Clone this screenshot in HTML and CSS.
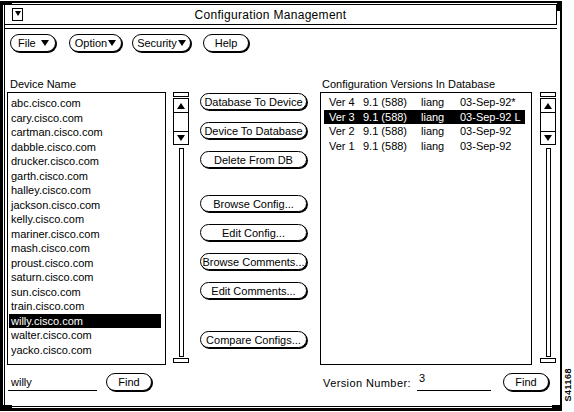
FILE: index.html
```html
<!DOCTYPE html>
<html lang="en">
<head>
    <meta charset="UTF-8">
    <title>Configuration Management</title>
    <link rel="stylesheet" href="styles.css">
</head>
<body>
<div class="screen">
    <div class="frame">
        <span class="corner tl"></span>
        <span class="corner tr"></span>
        <span class="corner bl"></span>
        <span class="corner br"></span>
        <div class="inner">
            <div class="titlebar">
                <span class="win-menu"><span class="tri-down small"></span></span>
                <span class="title">Configuration Management</span>
            </div>
            <div class="title-rule"></div>

            <div class="menubar">
                <button class="pill menu-file">File <span class="tri-down"></span></button>
                <button class="pill menu-option">Option<span class="tri-down"></span></button>
                <button class="pill menu-security">Security<span class="tri-down"></span></button>
                <button class="pill menu-help">Help</button>
            </div>

            <div class="panes">
                <div class="label device-label">Device Name</div>
                <div class="label versions-label">Configuration Versions In Database</div>

                <ul class="listbox devices">
                    <li>abc.cisco.com</li>
                    <li>cary.cisco.com</li>
                    <li>cartman.cisco.com</li>
                    <li>dabble.cisco.com</li>
                    <li>drucker.cisco.com</li>
                    <li>garth.cisco.com</li>
                    <li>halley.cisco.com</li>
                    <li>jackson.cisco.com</li>
                    <li>kelly.cisco.com</li>
                    <li>mariner.cisco.com</li>
                    <li>mash.cisco.com</li>
                    <li>proust.cisco.com</li>
                    <li>saturn.cisco.com</li>
                    <li>sun.cisco.com</li>
                    <li>train.cisco.com</li>
                    <li class="selected">willy.cisco.com</li>
                    <li>walter.cisco.com</li>
                    <li>yacko.cisco.com</li>
                </ul>

                <div class="scrollbar devices-sb">
                    <div class="sb-cap"></div>
                    <div class="sb-arrows">
                        <div class="sb-up"><span class="tri-up"></span></div>
                        <div class="sb-mid"></div>
                        <div class="sb-down"><span class="tri-down"></span></div>
                    </div>
                    <div class="sb-track"></div>
                    <div class="sb-cap end"></div>
                </div>

                <div class="actions">
                    <button class="pill action">Database To Device</button>
                    <button class="pill action">Device To Database</button>
                    <button class="pill action">Delete From DB</button>
                    <button class="pill action group-start">Browse Config...</button>
                    <button class="pill action">Edit Config...</button>
                    <button class="pill action">Browse Comments...</button>
                    <button class="pill action">Edit Comments...</button>
                    <button class="pill action last-group">Compare Configs...</button>
                </div>

                <div class="listbox versions">
                    <div class="ver-row"><span class="c-ver">Ver 4</span><span class="c-ios">9.1 (588)</span><span class="c-user">liang</span><span class="c-date">03-Sep-92*</span></div>
                    <div class="ver-row selected"><span class="c-ver">Ver 3</span><span class="c-ios">9.1 (588)</span><span class="c-user">liang</span><span class="c-date">03-Sep-92 L</span></div>
                    <div class="ver-row"><span class="c-ver">Ver 2</span><span class="c-ios">9.1 (588)</span><span class="c-user">liang</span><span class="c-date">03-Sep-92</span></div>
                    <div class="ver-row"><span class="c-ver">Ver 1</span><span class="c-ios">9.1 (588)</span><span class="c-user">liang</span><span class="c-date">03-Sep-92</span></div>
                </div>

                <div class="scrollbar versions-sb">
                    <div class="sb-cap"></div>
                    <div class="sb-arrows">
                        <div class="sb-up"><span class="tri-up"></span></div>
                        <div class="sb-mid"></div>
                        <div class="sb-down"><span class="tri-down"></span></div>
                    </div>
                    <div class="sb-track"></div>
                    <div class="sb-cap end"></div>
                </div>

                <div class="find-row device-find">
                    <input class="field device-field" type="text" value="willy">
                    <button class="pill find">Find</button>
                </div>

                <div class="find-row version-find">
                    <span class="field-label">Version Number:</span>
                    <input class="field version-field" type="text" value="3">
                    <button class="pill find">Find</button>
                </div>
            </div>
        </div>
    </div>
    <div class="margin-note"><span>S41168</span></div>
</div>
</body>
</html>
```

FILE: styles.css
```css
body {
    margin: 0;
    font-family: "Liberation Sans", Arial, sans-serif;
    font-size: 11px;
    color: #000;
    background-color: #fff;
}
.screen {
    display: flex;
    width: 574px;
    height: 412px;
}
/* Window frame */
.frame {
    position: relative;
    width: 557px;
    height: 405px;
    margin-top: 1px;
    border-top: 2px solid #000;
    border-left: 3px solid #000;
    border-right: 2px solid #000;
    border-bottom: 3px solid #000;
    display: flex;
}
.inner {
    flex: 1;
    display: flex;
    flex-direction: column;
    margin: 0 0 1px 1px;
    border-left: 1px solid #000;
    border-bottom: 1px solid #000;
}
.corner {
    position: absolute;
    background-color: #000;
}
.corner.tl {
    left: 0;
    top: 0;
    width: 9px;
    height: 2px;
}
.corner.tr {
    right: 0;
    top: 0;
    width: 3px;
    height: 8px;
}
.corner.bl {
    left: 0;
    bottom: 0;
    width: 9px;
    height: 3px;
}
.corner.br {
    right: 0;
    bottom: 0;
    width: 8px;
    height: 3px;
}
/* Title bar */
.titlebar {
    box-sizing: border-box;
    height: 21px;
    margin: 1px 3px 0 0;
    border: 1px solid #000;
    border-left: none;
    display: flex;
    align-items: center;
}
.win-menu {
    box-sizing: border-box;
    width: 11px;
    height: 13px;
    margin-left: 7px;
    border: 1px solid #000;
    display: flex;
    justify-content: center;
    padding-top: 2px;
}
.title {
    flex: 1;
    text-align: center;
    font-size: 12px;
    padding-right: 38px;
    letter-spacing: 0.3px;
}
.title-rule {
    height: 1px;
    margin: 3px 3px 0 0;
    background-color: #000;
}
/* Triangles */
.tri-down {
    width: 0;
    height: 0;
    border-left: 4px solid transparent;
    border-right: 4px solid transparent;
    border-top: 6px solid #000;
}
.tri-down.small {
    border-left-width: 3px;
    border-right-width: 3px;
    border-top-width: 5px;
}
.tri-up {
    width: 0;
    height: 0;
    border-left: 4px solid transparent;
    border-right: 4px solid transparent;
    border-bottom: 6px solid #000;
}
/* Buttons */
.pill {
    box-sizing: border-box;
    height: 17px;
    padding: 0;
    border: 1px solid #000;
    border-radius: 9px;
    box-shadow: 1px 1px 0 #000;
    background-color: #fff;
    color: #000;
    font: inherit;
    display: flex;
    align-items: center;
    justify-content: center;
}
.menubar {
    display: flex;
    height: 18px;
    margin-top: 5px;
    padding-left: 5px;
}
.menubar .pill {
    height: 18px;
}
.menu-file {
    width: 46px;
    justify-content: space-between;
    padding: 0 6px 0 7px;
}
.menu-option {
    width: 53px;
    margin-left: 13px;
    gap: 1px;
}
.menu-security {
    width: 59px;
    margin-left: 10px;
    gap: 1px;
}
.menu-help {
    width: 46px;
    margin-left: 12px;
}
/* Main panes */
.panes {
    display: grid;
    grid-template-columns: 159px 7px 16px 11px 108px 12px 212px 8px 16px;
    grid-template-rows: 16px 273px 7px 20px;
    margin: 24px 0 0 2px;
}
.label {
    line-height: 16px;
    grid-row: 1;
}
.device-label {
    grid-column: 1;
    padding-left: 3px;
}
.versions-label {
    grid-column: 7 / 10;
    padding-left: 2px;
}
.listbox {
    box-sizing: border-box;
    margin: 0;
    border: 1px solid #000;
    grid-row: 2;
}
.devices {
    grid-column: 1;
    list-style: none;
    padding: 3px 0 0 0;
}
.devices li {
    height: 14.5px;
    line-height: 14.5px;
    margin: 0 4px 0 1px;
    padding-left: 2px;
    white-space: nowrap;
}
.selected {
    background-color: #000;
    color: #fff;
}
.versions {
    grid-column: 7;
    padding-top: 2px;
}
.ver-row {
    display: flex;
    height: 14.5px;
    line-height: 14.5px;
    margin: 0 6px 0 3px;
    padding-left: 5px;
    white-space: nowrap;
}
.ver-row span {
    flex: none;
}
.c-ver {
    width: 34px;
}
.c-ios {
    width: 58px;
}
.c-user {
    width: 39px;
}
/* Scrollbars */
.scrollbar {
    grid-row: 2;
    display: flex;
    flex-direction: column;
    align-items: center;
}
.devices-sb {
    grid-column: 3;
}
.versions-sb {
    grid-column: 9;
}
.sb-cap {
    box-sizing: border-box;
    width: 16px;
    height: 5px;
    border: 1px solid #000;
}
.sb-cap.end {
    margin: 1px 0 2px 0;
}
.sb-arrows {
    box-sizing: border-box;
    width: 16px;
    height: 47px;
    margin-top: 1px;
    border: 1px solid #000;
    display: flex;
    flex-direction: column;
}
.sb-up {
    height: 13px;
    border-bottom: 1px solid #000;
    display: flex;
    align-items: center;
    justify-content: center;
}
.sb-mid {
    flex: 1;
}
.sb-down {
    height: 12px;
    border-top: 1px solid #000;
    display: flex;
    align-items: center;
    justify-content: center;
}
.sb-track {
    box-sizing: border-box;
    flex: 1;
    width: 5px;
    margin-top: 3px;
    border: 1px solid #000;
}
/* Action buttons */
.actions {
    grid-column: 5;
    grid-row: 2;
    display: flex;
    flex-direction: column;
    align-items: flex-start;
    padding-top: 1px;
}
.action {
    width: 107px;
    margin-top: 12px;
    white-space: nowrap;
}
.action:first-child {
    margin-top: 0;
}
.action.group-start {
    margin-top: 27px;
}
.action.last-group {
    margin-top: 32px;
}
/* Bottom find rows */
.find-row {
    grid-row: 4;
    display: flex;
    align-items: flex-start;
}
.device-find {
    grid-column: 1;
}
.version-find {
    grid-column: 7 / 10;
}
.field {
    box-sizing: border-box;
    height: 19px;
    padding: 0 0 0 3px;
    border: none;
    border-bottom: 1px solid #000;
    font: inherit;
    color: #000;
    background: transparent;
    outline: none;
}
.device-field {
    width: 89px;
    margin-left: 1px;
    padding-top: 2px;
}
.find-row .find {
    width: 46px;
    height: 18px;
    margin-top: 1px;
}
.device-find .find {
    margin-left: 9px;
}
.field-label {
    padding: 5px 0 0 3px;
    width: 94px;
    letter-spacing: 0.4px;
}
.version-field {
    width: 74px;
    padding: 0 0 6px 2px;
}
.version-find .find {
    margin-left: 12px;
}
/* Figure number in the margin */
.margin-note {
    width: 12px;
    display: flex;
    align-items: flex-end;
    justify-content: center;
    padding-bottom: 10px;
    box-sizing: border-box;
}
.margin-note span {
    writing-mode: vertical-rl;
    transform: rotate(180deg);
    font-size: 9px;
    font-weight: bold;
    letter-spacing: 0.5px;
}
```
